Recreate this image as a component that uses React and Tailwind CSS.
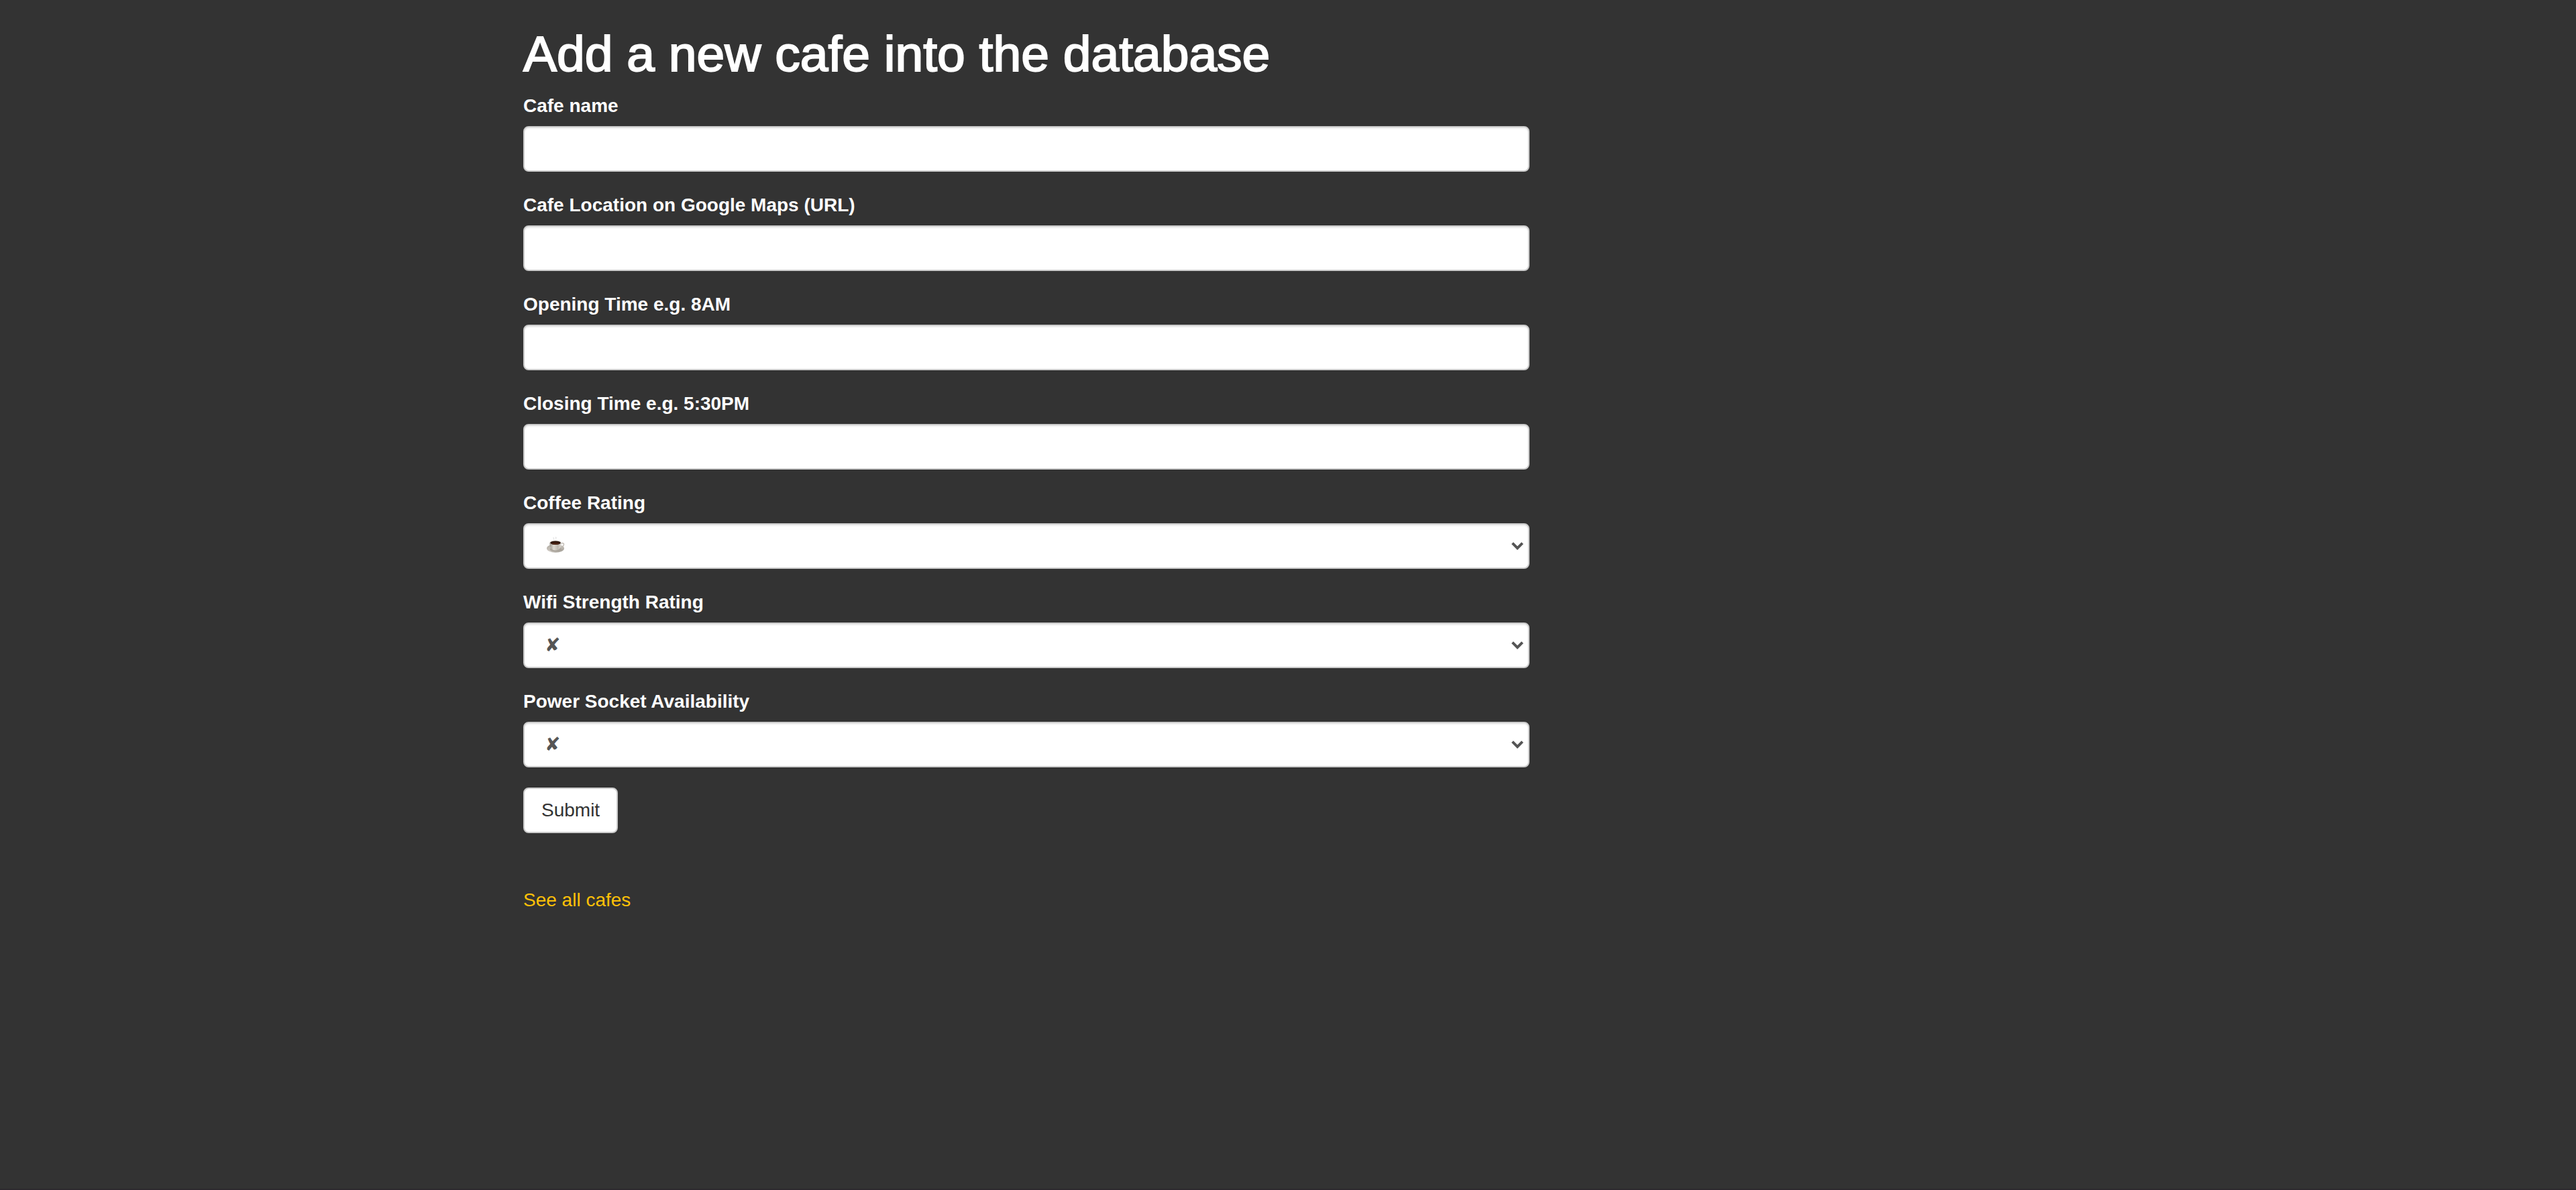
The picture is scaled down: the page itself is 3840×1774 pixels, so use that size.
import React from "react";

const textFields = [
  { id: "cafe", label: "Cafe name" },
  { id: "location", label: "Cafe Location on Google Maps (URL)" },
  { id: "open", label: "Opening Time e.g. 8AM" },
  { id: "close", label: "Closing Time e.g. 5:30PM" },
];

const labelClass = "mb-2.5 block text-[28px] leading-10 font-bold text-white";
const controlClass =
  "block h-[68px] w-full rounded-lg border-2 border-[#ccc] bg-white text-[28px] shadow-[inset_0_2px_2px_rgba(0,0,0,0.075)] outline-none focus:border-[#66afe9]";

function TextField({ id, label }) {
  return (
    <div className="mb-[30px]">
      <label htmlFor={id} className={labelClass}>
        {label}
      </label>
      <input id={id} name={id} type="text" className={`${controlClass} px-6 text-[#555]`} />
    </div>
  );
}

function Chevron() {
  return (
    <svg
      aria-hidden="true"
      viewBox="0 0 18 12"
      className="pointer-events-none absolute top-1/2 right-[9px] h-3 w-[18px] -translate-y-1/2"
    >
      <path d="M1.5 1.6 9 9.1 16.5 1.6" fill="none" stroke="#555" strokeWidth="4" />
    </svg>
  );
}

function CoffeeCup() {
  return (
    <svg
      aria-hidden="true"
      viewBox="0 0 28 26"
      className="pointer-events-none absolute top-5 left-[34px] h-[26px] w-7"
    >
      <defs>
        <linearGradient id="cup-side" x1="0" x2="1" y1="0" y2="0">
          <stop offset="0" stopColor="#98948d" />
          <stop offset="0.35" stopColor="#dcd8d1" />
          <stop offset="0.7" stopColor="#bdb8b0" />
          <stop offset="1" stopColor="#dedad5" />
        </linearGradient>
        <linearGradient id="saucer" x1="0" x2="1" y1="0" y2="1">
          <stop offset="0" stopColor="#aca69d" />
          <stop offset="0.5" stopColor="#cfcac3" />
          <stop offset="1" stopColor="#969189" />
        </linearGradient>
      </defs>
      <path
        d="M11.500 1c-1.500 1.200.8 1.800.2 3.500M13.800 1c2-.3 1.800 1.700.4 2"
        fill="none"
        stroke="#d9d9d9"
        strokeWidth="1"
      />
      <ellipse cx="14" cy="17.500" rx="13" ry="6.200" fill="url(#saucer)" />
      <ellipse cx="14.500" cy="19" rx="9" ry="3.200" fill="#aaa49b" />
      <path d="M22 10.500c3-1.800 5.300-.4 4.400 2-.8 2.200-3.200 3.400-6 3.800" fill="none" stroke="#bdb8b0" strokeWidth="1.300" />
      <path d="M5.300 9c0 7 3 11.500 8.700 11.500s8.700-4.500 8.700-11.500z" fill="url(#cup-side)" />
      <ellipse cx="14" cy="9" rx="8.700" ry="3.300" fill="#d2cdc6" />
      <ellipse cx="14" cy="9.200" rx="7.800" ry="2.800" fill="#2c140c" />
      <ellipse cx="14" cy="10.200" rx="5.500" ry="1.500" fill="#4b2415" />
    </svg>
  );
}

function SelectField({ id, label, options, textClass, children }) {
  return (
    <div className="mb-[30px]">
      <label htmlFor={id} className={labelClass}>
        {label}
      </label>
      <div className="relative">
        <select id={id} name={id} className={`${controlClass} appearance-none pr-12 pl-[30px] ${textClass}`}>
          {options.map((option) => (
            <option key={option}>{option}</option>
          ))}
        </select>
        {children}
        <Chevron />
      </div>
    </div>
  );
}

export default function App() {
  return (
    <main className="min-h-screen border-b-2 border-[#2d2a2e] bg-[#333] font-['Liberation_Sans',Arial,sans-serif] text-[28px] leading-10 text-white">
      <div className="mx-auto max-w-[2340px]">
        <div className="grid grid-cols-12">
          <div className="col-span-12 px-[30px] pt-10 md:col-span-8">
            <h1 className="mb-[18px] text-[75px] leading-[80px] font-normal [-webkit-text-stroke:2px_white]">
              Add a new cafe into the database
            </h1>
            <form onSubmit={(event) => event.preventDefault()}>
              {textFields.map((field) => (
                <TextField key={field.id} {...field} />
              ))}
              <SelectField
                id="coffee"
                label="Coffee Rating"
                options={["☕️", "☕☕", "☕☕☕", "☕☕☕☕", "☕☕☕☕☕"]}
                textClass="text-transparent"
              >
                <CoffeeCup />
              </SelectField>
              <SelectField
                id="wifi"
                label="Wifi Strength Rating"
                options={["✘", "💪", "💪💪", "💪💪💪", "💪💪💪💪", "💪💪💪💪💪"]}
                textClass="text-[#555]"
              />
              <SelectField
                id="power"
                label="Power Socket Availability"
                options={["✘", "🔌", "🔌🔌", "🔌🔌🔌", "🔌🔌🔌🔌", "🔌🔌🔌🔌🔌"]}
                textClass="text-[#555]"
              />
              <button
                type="submit"
                className="block h-[68px] rounded-lg border-2 border-[#ccc] bg-white px-[25px] text-[#333]"
              >
                Submit
              </button>
            </form>
            <p className="mt-20 mb-5">
              <a href="#cafes" className="text-[#ffc107] hover:underline">
                See all cafes
              </a>
            </p>
          </div>
        </div>
      </div>
    </main>
  );
}
